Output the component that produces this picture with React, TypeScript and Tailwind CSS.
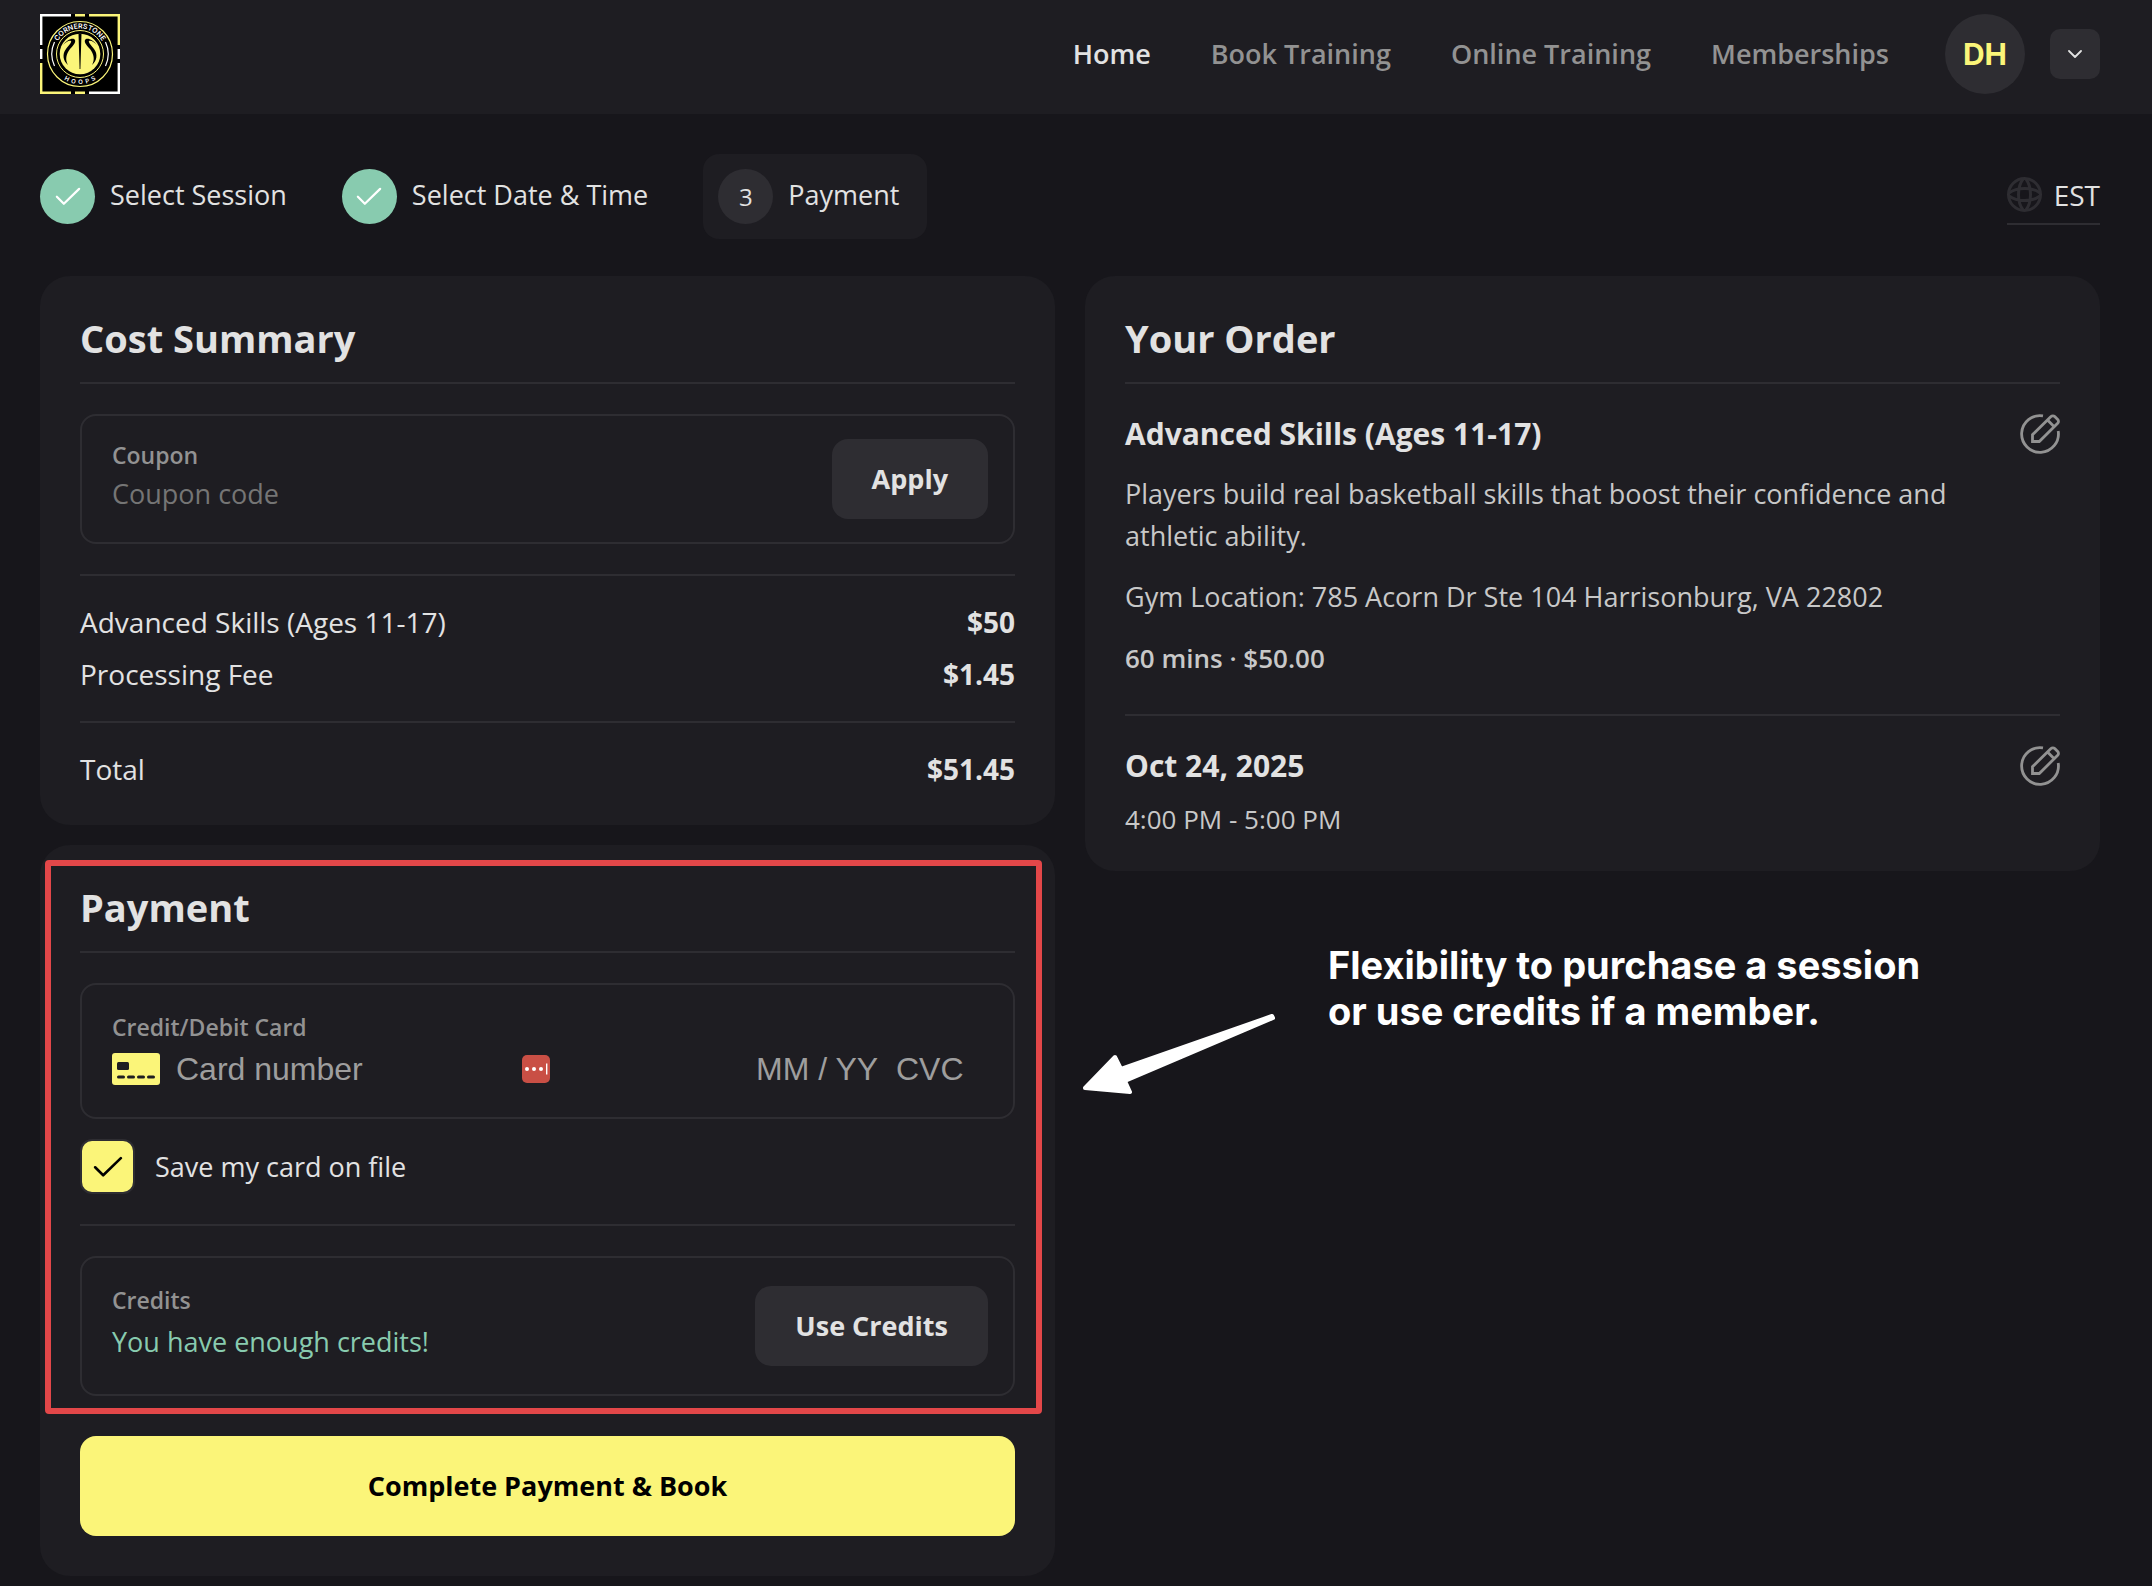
import { useState } from "react";
import type { ReactNode } from "react";

const navLinks = [
  { label: "Home", active: true },
  { label: "Book Training", active: false },
  { label: "Online Training", active: false },
  { label: "Memberships", active: false },
];

const steps = [
  { label: "Select Session", done: true },
  { label: "Select Date & Time", done: true },
  { label: "Payment", done: false },
];

const costs = [
  { label: "Advanced Skills (Ages 11-17)", amount: "$50" },
  { label: "Processing Fee", amount: "$1.45" },
];

const Logo = () => (
  <svg viewBox="0 0 80 80" className="size-20" role="img" aria-label="Cornerstone Hoops">
    <defs>
      <path id="logo-top" d="M14.5 40a25.5 25.5 0 0 1 51 0" />
      <path id="logo-bottom" d="M10 40a30 30 0 0 0 60 0" />
    </defs>
    <rect width="80" height="80" fill="#000" />
    <g fill="none" strokeWidth="2.4">
      <path d="M31 1.2H1.2V31M1.2 35v10M78.8 35v10M49 78.8h29.8V49" stroke="#fff" />
      <path d="M35 1.2h10M49 1.2h29.8V31M1.2 49v29.8H31M35 78.8h10" stroke="#fbf579" />
    </g>
    <circle cx="40" cy="40" r="32.5" fill="none" stroke="#fbf579" strokeWidth="1.2" />
    <circle cx="40" cy="40" r="23.5" fill="none" stroke="#fbf579" strokeWidth="1" />
    <circle cx="40" cy="40" r="20.3" fill="#fbf579" />
    <path d="M38.5 19.5h3L40.4 55h-.8z" fill="#000" />
    <g fill="#000">
      <path d="M23 31c3-4 8-7 11-6 3 2 0 6-4 10-4 5-5 11-2 16-5-4-6-11-2-16 3-4 6-7 5-8-2-1-5 1-8 4z" />
      <path d="M57 31c-3-4-8-7-11-6-3 2 0 6 4 10 4 5 5 11 2 16 5-4 6-11 2-16-3-4-6-7-5-8 2-1 5 1 8 4z" />
    </g>
    <path d="M14.500 28a28.500 28.500 0 0 0 0 24M65.500 28a28.500 28.500 0 0 1 0 24" fill="none" stroke="#fff" strokeWidth="1.200" />
    <g fill="#fff" fontFamily="Inter, sans-serif" fontWeight="600" textAnchor="middle">
      <text fontSize="7">
        <textPath href="#logo-top" startOffset="50%">CORNERSTONE</textPath>
      </text>
      <text fontSize="6">
        <textPath href="#logo-bottom" startOffset="50%">{"H\u00a0\u00a0O\u00a0\u00a0O\u00a0\u00a0P\u00a0\u00a0S"}</textPath>
      </text>
    </g>
  </svg>
);

const CheckIcon = ({ className }: { className: string }) => (
  <svg viewBox="0 0 28 20" className={className} fill="none" stroke="currentColor" strokeWidth="2.4" strokeLinecap="round" strokeLinejoin="round" aria-hidden="true">
    <path d="M2 10.500l7.500 7.500L26 2" />
  </svg>
);

const GlobeIcon = () => (
  <svg viewBox="0 0 35 35" className="size-[35px] text-[#2e2d32]" fill="none" stroke="currentColor" strokeWidth="3" aria-hidden="true">
    <circle cx="17.500" cy="17.500" r="16" />
    <path d="M16 2c-6 8-6 23 0 31M19 2c6 8 6 23 0 31M2 16c8-6 23-6 31 0M2 19c8 6 23 6 31 0" />
  </svg>
);

const EditIcon = () => (
  <svg viewBox="0 0 40 40" className="size-10" fill="none" stroke="currentColor" strokeWidth="2.8" aria-hidden="true">
    <path d="M23 1.800A18.400 18.400 0 1 0 38.200 17" />
    <path d="M12.500 27.500v-6.800L31 2.600a2.600 2.600 0 0 1 3.700 0l3 3a2.600 2.600 0 0 1 0 3.700L19.300 27.500zM27.500 6l6.700 6.800" />
  </svg>
);

const CardIcon = () => (
  <svg viewBox="0 0 48 32" className="h-8 w-12" aria-hidden="true">
    <rect width="48" height="32" rx="3" fill="#fbf579" />
    <rect x="5" y="9" width="12" height="8" rx="1.500" fill="#1e1d22" />
    <path d="M6.500 24h5M16.500 24h5M26.500 24h5M36.500 24h5" stroke="#1e1d22" strokeWidth="3" strokeLinecap="round" />
  </svg>
);

const PasswordIcon = () => (
  <svg viewBox="0 0 28 28" className="size-7" aria-hidden="true">
    <rect width="28" height="28" rx="5" fill="#c94f45" />
    <g fill="#fff">
      <circle cx="5" cy="14" r="2" />
      <circle cx="12" cy="14" r="2" />
      <circle cx="19" cy="14" r="2" />
      <rect x="24" y="8.500" width="1.400" height="11" />
    </g>
  </svg>
);

const Card = ({ title, children }: { title: string; children: ReactNode }) => (
  <section className="relative rounded-[30px] bg-[#1e1d22] px-10 pt-[42px]">
    <h2 className="border-b-2 border-[#2e2d32] pb-6 text-[38px] leading-10 font-bold">{title}</h2>
    {children}
  </section>
);

const App = () => {
  const [saveCard, setSaveCard] = useState(true);

  return (
    <div className="min-h-screen bg-[#17161b] pb-[10px] font-['Open_Sans',sans-serif] text-[27px] leading-9 text-[#e2e2e2]">
      <header className="flex items-center justify-between bg-[#1e1d22] pt-[14px] pr-[52px] pb-5 pl-10">
        <a href="#home">
          <Logo />
        </a>
        <div className="flex items-center">
          <nav className="flex gap-[60px] font-semibold">
            {navLinks.map((link) => (
              <a key={link.label} href="#nav" className={link.active ? "text-[#e2e2e2]" : "text-[#929292]"}>
                {link.label}
              </a>
            ))}
          </nav>
          <span className="ml-14 flex size-20 items-center justify-center rounded-full bg-[#2e2d32] font-['Inter',sans-serif] text-[30px] font-bold text-[#fbf579]">
            DH
          </span>
          <button type="button" aria-label="Account menu" className="ml-[25px] flex size-[50px] items-center justify-center rounded-[10px] bg-[#2e2d32]">
            <svg viewBox="0 0 14 8" className="h-2 w-[14px]" fill="none" stroke="currentColor" strokeWidth="1.800" strokeLinecap="round" strokeLinejoin="round" aria-hidden="true">
              <path d="M1 1l6 6 6-6" />
            </svg>
          </button>
        </div>
      </header>

      <main className="pt-10 pr-[52px] pl-10">
        <div className="flex items-center justify-between">
          <ol className="flex items-center gap-[55px]">
            {steps.map((step, index) => (
              <li
                key={step.label}
                className={step.done ? "flex items-center gap-[15px]" : "flex items-center gap-[15px] rounded-2xl bg-[#1e1d22] py-[15px] pr-7 pl-[15px]"}
              >
                {step.done ? (
                  <span className="flex size-[55px] items-center justify-center rounded-full bg-[#88cbaf] text-white">
                    <CheckIcon className="w-[26px]" />
                  </span>
                ) : (
                  <span className="flex size-[55px] items-center justify-center rounded-full bg-[#2e2d32] text-2xl">{index + 1}</span>
                )}
                <span className="pb-1">{step.label}</span>
              </li>
            ))}
          </ol>
          <button type="button" className="flex items-center gap-3 border-b-2 border-[#2e2d32] pt-2 pb-[10px] text-[28px]">
            <GlobeIcon />
            EST
          </button>
        </div>

        <div className="mt-[37px] grid grid-cols-2 items-start gap-[30px]">
          <div className="flex flex-col gap-5">
            <Card title="Cost Summary">
              <div className="my-[30px] flex items-center justify-between rounded-2xl border-2 border-[#2e2d32] py-[23px] pr-[25px] pl-[30px]">
                <div className="flex flex-col">
                  <label htmlFor="coupon" className="text-[23px] leading-7 font-semibold text-[#929292]">Coupon</label>
                  <input id="coupon" placeholder="Coupon code" className="h-12 bg-transparent outline-none placeholder:text-[#757575]" />
                </div>
                <button type="button" className="h-20 rounded-2xl bg-[#2e2d32] px-10 font-bold">Apply</button>
              </div>
              <dl className="flex flex-col gap-4 border-t-2 border-[#2e2d32] pt-7 pb-[29px] text-[28px]">
                {costs.map((cost) => (
                  <div key={cost.label} className="flex justify-between">
                    <dt>{cost.label}</dt>
                    <dd className="font-bold">{cost.amount}</dd>
                  </div>
                ))}
              </dl>
              <dl className="flex justify-between border-t-2 border-[#2e2d32] pt-7 pb-[38px] text-[28px]">
                <dt>Total</dt>
                <dd className="font-bold">$51.45</dd>
              </dl>
            </Card>

            <Card title="Payment">
              <div className="mt-[30px] mb-5 rounded-2xl border-2 border-[#2e2d32] pt-7 pr-[25px] pb-8 pl-[30px]">
                <label htmlFor="card-number" className="block text-[23px] leading-7 font-semibold text-[#929292]">Credit/Debit Card</label>
                <div className="mt-3 flex h-8 items-center font-['Liberation_Sans',Arial,sans-serif] text-[32px]">
                  <CardIcon />
                  <input id="card-number" placeholder="Card number" className="ml-4 w-[346px] bg-transparent outline-none placeholder:text-[#9e9e9e]" />
                  <PasswordIcon />
                  <input aria-label="Expiry date" placeholder="MM / YY" className="ml-auto w-[140px] bg-transparent outline-none placeholder:text-[#9e9e9e]" />
                  <input aria-label="CVC" placeholder="CVC" className="w-[92px] bg-transparent outline-none placeholder:text-[#9e9e9e]" />
                </div>
              </div>
              <label className="flex items-center gap-5">
                <span className="grid size-[55px] place-items-center">
                  <input
                    type="checkbox"
                    checked={saveCard}
                    onChange={(e) => setSaveCard(e.target.checked)}
                    className="col-start-1 row-start-1 size-[55px] appearance-none rounded-xl border-2 border-[#2e2d32] checked:bg-[#fbf579]"
                  />
                  {saveCard && <CheckIcon className="pointer-events-none col-start-1 row-start-1 w-[30px] text-black" />}
                </span>
                Save my card on file
              </label>
              <div className="mt-[30px] border-t-2 border-[#2e2d32] pt-[30px]">
                <div className="flex items-center justify-between rounded-2xl border-2 border-[#2e2d32] py-7 pr-[25px] pl-[30px]">
                  <div className="self-start">
                    <p className="text-[23px] leading-7 font-semibold text-[#929292]">Credits</p>
                    <p className="mt-[10px] text-[#88cbaf]">You have enough credits!</p>
                  </div>
                  <button type="button" className="h-20 rounded-2xl bg-[#2e2d32] px-10 font-bold">Use Credits</button>
                </div>
              </div>
              <div className="pointer-events-none absolute top-[15px] right-[13px] left-[5px] h-[554px] rounded-[4px] border-6 border-[#e34749]" />
              <div className="py-10">
                <button type="button" className="h-[100px] w-full rounded-2xl bg-[#fbf579] font-bold text-black">Complete Payment &amp; Book</button>
              </div>
            </Card>
          </div>

          <div>
            <Card title="Your Order">
              <div className="flex items-start justify-between border-b-2 border-[#2e2d32] pt-[30px] pb-[35px] leading-[42px] text-[#c8c8c8]">
                <div className="flex max-w-[860px] flex-col gap-[19px]">
                  <h3 className="text-[30px] leading-10 font-bold text-[#e2e2e2]">Advanced Skills (Ages 11-17)</h3>
                  <p>Players build real basketball skills that boost their confidence and athletic ability.</p>
                  <p>Gym Location: 785 Acorn Dr Ste 104 Harrisonburg, VA 22802</p>
                  <p className="text-[26px] font-semibold">60 mins · $50.00</p>
                </div>
                <button type="button" aria-label="Edit session" className="text-[#929292]">
                  <EditIcon />
                </button>
              </div>
              <div className="flex items-start justify-between pt-[30px] pb-[31px] leading-[42px] text-[#c8c8c8]">
                <div className="flex flex-col gap-3">
                  <h3 className="text-[30px] leading-10 font-bold text-[#e2e2e2]">Oct 24, 2025</h3>
                  <p className="text-[26px]">4:00 PM - 5:00 PM</p>
                </div>
                <button type="button" aria-label="Edit date" className="text-[#929292]">
                  <EditIcon />
                </button>
              </div>
            </Card>

            <div className="mt-[71px] flex items-start gap-[51px] text-white">
              <svg viewBox="0 0 192 84" className="mt-[70px] h-[84px] w-48 overflow-visible" fill="currentColor" stroke="currentColor" strokeWidth="4" strokeLinejoin="round" aria-hidden="true">
                <path d="M0 76L30 45L36 57L187 4L188 6L40 69L45 80Z" />
              </svg>
              <p className="font-['Inter',sans-serif] text-[38px] leading-[46px] font-bold">
                Flexibility to purchase a session
                <br />
                or use credits if a member.
              </p>
            </div>
          </div>
        </div>
      </main>
    </div>
  );
};

export default App;
